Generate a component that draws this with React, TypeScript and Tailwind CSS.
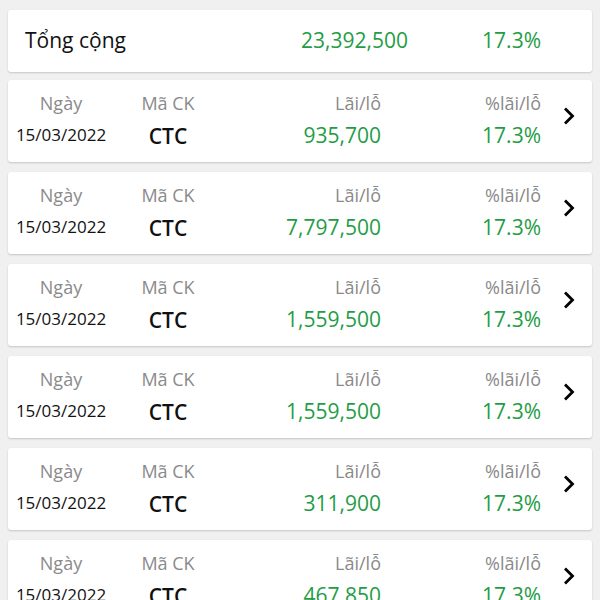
interface Row {
  date: string;
  code: string;
  pnl: string;
  pct: string;
}

const rows: Row[] = [
  { date: '15/03/2022', code: 'CTC', pnl: '935,700', pct: '17.3%' },
  { date: '15/03/2022', code: 'CTC', pnl: '7,797,500', pct: '17.3%' },
  { date: '15/03/2022', code: 'CTC', pnl: '1,559,500', pct: '17.3%' },
  { date: '15/03/2022', code: 'CTC', pnl: '1,559,500', pct: '17.3%' },
  { date: '15/03/2022', code: 'CTC', pnl: '311,900', pct: '17.3%' },
  { date: '15/03/2022', code: 'CTC', pnl: '467,850', pct: '17.3%' },
];

function Chevron() {
  return (
    <svg width="12" height="20" viewBox="0 0 12 20" fill="none">
      <path d="M2 2.5 L9.5 10 L2 17.5" stroke="#000" strokeWidth="2.8" strokeLinejoin="miter" />
    </svg>
  );
}

function TradeCard({ row }: { row: Row }) {
  return (
    <div className="flex h-[82px] shrink-0 items-stretch rounded-[3px] bg-white shadow-[0_1px_2px_rgba(0,0,0,0.18)]">
      <div className="flex w-[106px] flex-col items-center pt-[11px]">
        <span className="text-[18px] leading-[24px] text-[#8a8a8a]">Ngày</span>
        <span className="mt-[8px] text-[17px] leading-[24px] font-medium text-[#111]">{row.date}</span>
      </div>
      <div className="flex w-[108px] flex-col items-center pt-[11px]">
        <span className="text-[18px] leading-[24px] text-[#8a8a8a]">Mã CK</span>
        <span className="mt-[7px] text-[21px] leading-[28px] font-semibold text-[#111]">{row.code}</span>
      </div>
      <div className="flex w-[159px] flex-col items-end pt-[11px]">
        <span className="text-[18px] leading-[24px] text-[#8a8a8a]">Lãi/lỗ</span>
        <span className="mt-[6px] text-[21px] leading-[28px] text-[#1f9d45]">{row.pnl}</span>
      </div>
      <div className="flex w-[160px] flex-col items-end pt-[11px]">
        <span className="text-[18px] leading-[24px] text-[#8a8a8a]">%lãi/lỗ</span>
        <span className="mt-[6px] text-[21px] leading-[28px] text-[#1f9d45]">{row.pct}</span>
      </div>
      <div className="flex flex-1 items-center justify-center pb-[10px] pl-[4px]">
        <Chevron />
      </div>
    </div>
  );
}

export default function App() {
  return (
    <div
      className="flex h-[600px] w-[600px] flex-col gap-[10px] overflow-hidden bg-[#f0f0f0] px-[8px] pt-[10px]"
      style={{ fontFamily: '"Open Sans", sans-serif' }}
    >
      <div className="mb-[-2px] flex h-[62px] shrink-0 items-center rounded-[3px] bg-white shadow-[0_1px_2px_rgba(0,0,0,0.18)]">
        <span className="flex-1 pl-[17px] text-[21px] text-[#111]">Tổng cộng</span>
        <span className="text-[21px] text-[#1f9d45]">23,392,500</span>
        <span className="w-[133px] text-right text-[21px] text-[#1f9d45]">17.3%</span>
        <span className="w-[51px]" />
      </div>
      {rows.map((row, i) => (
        <TradeCard key={i} row={row} />
      ))}
    </div>
  );
}
